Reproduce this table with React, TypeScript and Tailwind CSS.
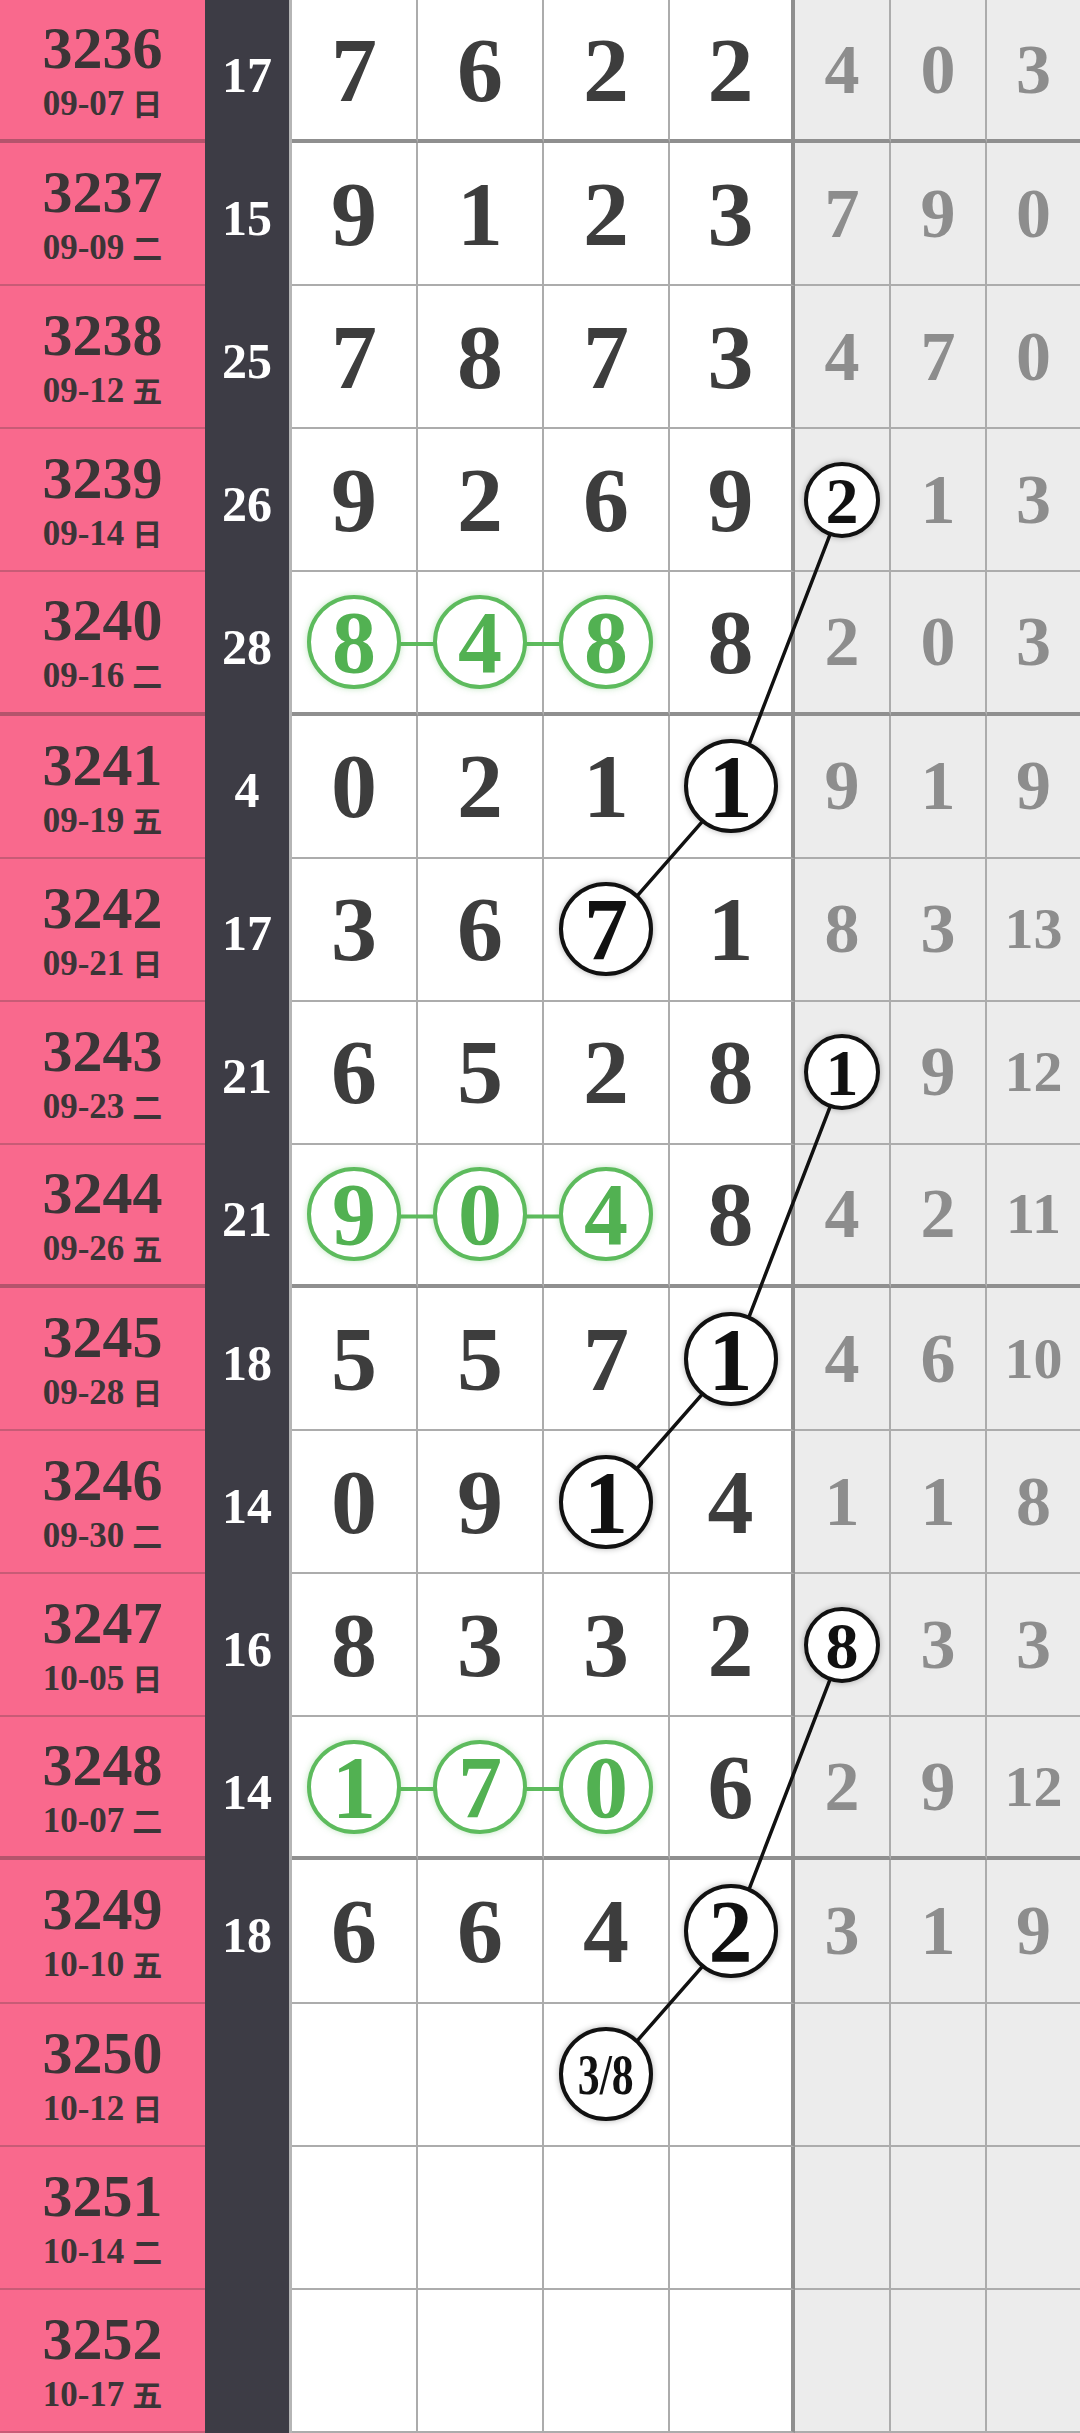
import React from 'react';

type Row = {
  no: string;
  date: string;
  day: string;
  sum?: string;
  nums: string[];
  miss: string[];
  ring?: number;
  green?: boolean;
};

const rows: Row[] = [
  { no: '3236', date: '09-07', day: '日', sum: '17', nums: ['7', '6', '2', '2'], miss: ['4', '0', '3'] },
  { no: '3237', date: '09-09', day: '二', sum: '15', nums: ['9', '1', '2', '3'], miss: ['7', '9', '0'] },
  { no: '3238', date: '09-12', day: '五', sum: '25', nums: ['7', '8', '7', '3'], miss: ['4', '7', '0'] },
  { no: '3239', date: '09-14', day: '日', sum: '26', nums: ['9', '2', '6', '9'], miss: ['2', '1', '3'], ring: 4 },
  { no: '3240', date: '09-16', day: '二', sum: '28', nums: ['8', '4', '8', '8'], miss: ['2', '0', '3'], green: true },
  { no: '3241', date: '09-19', day: '五', sum: '4', nums: ['0', '2', '1', '1'], miss: ['9', '1', '9'], ring: 3 },
  { no: '3242', date: '09-21', day: '日', sum: '17', nums: ['3', '6', '7', '1'], miss: ['8', '3', '13'], ring: 2 },
  { no: '3243', date: '09-23', day: '二', sum: '21', nums: ['6', '5', '2', '8'], miss: ['1', '9', '12'], ring: 4 },
  { no: '3244', date: '09-26', day: '五', sum: '21', nums: ['9', '0', '4', '8'], miss: ['4', '2', '11'], green: true },
  { no: '3245', date: '09-28', day: '日', sum: '18', nums: ['5', '5', '7', '1'], miss: ['4', '6', '10'], ring: 3 },
  { no: '3246', date: '09-30', day: '二', sum: '14', nums: ['0', '9', '1', '4'], miss: ['1', '1', '8'], ring: 2 },
  { no: '3247', date: '10-05', day: '日', sum: '16', nums: ['8', '3', '3', '2'], miss: ['8', '3', '3'], ring: 4 },
  { no: '3248', date: '10-07', day: '二', sum: '14', nums: ['1', '7', '0', '6'], miss: ['2', '9', '12'], green: true },
  { no: '3249', date: '10-10', day: '五', sum: '18', nums: ['6', '6', '4', '2'], miss: ['3', '1', '9'], ring: 3 },
  { no: '3250', date: '10-12', day: '日', nums: ['', '', '3/8', ''], miss: ['', '', ''], ring: 2 },
  { no: '3251', date: '10-14', day: '二', nums: ['', '', '', ''], miss: ['', '', ''] },
  { no: '3252', date: '10-17', day: '五', nums: ['', '', '', ''], miss: ['', '', ''] },
];

const ROW_H = 143.12;
const colX = [355, 481, 607, 732.5, 843, 939, 1033.5];
const cy = (i: number) => (i + 0.5) * ROW_H;

// trend lines: [row, col] pairs
const trends: [number, number][][] = [
  [[3, 4], [5, 3], [6, 2]],
  [[7, 4], [9, 3], [10, 2]],
  [[11, 4], [13, 3], [14, 2]],
];

const serif = { fontFamily: '"Liberation Serif", "Noto Sans CJK SC", serif' };

function Digit({ value, ring, green, small }: { value: string; ring?: boolean; green?: boolean; small?: boolean }) {
  if (!value) return null;
  if (green) {
    return (
      <div className="relative z-20 flex h-[94px] w-[94px] items-center justify-center rounded-full border-[4px] border-[#5dbb5d] bg-white text-[88px] font-bold leading-none text-[#52b152] shadow-[0_0_6px_rgba(80,180,80,0.35)]">
        <span className="mt-[2px]">{value}</span>
      </div>
    );
  }
  if (ring) {
    if (value === '3/8') {
      return (
        <div className="relative z-20 flex h-[94px] w-[94px] items-center justify-center rounded-full border-[4px] border-[#111] bg-white shadow-[0_0_6px_rgba(0,0,0,0.3)]">
          <span className="mt-[2px] text-[56px] font-bold leading-none text-[#111]" style={{ transform: 'scaleX(0.78)' }}>
            3/8
          </span>
        </div>
      );
    }
    return small ? (
      <div className="relative z-20 flex h-[76px] w-[76px] items-center justify-center rounded-full border-[4px] border-[#111] bg-white text-[66px] font-bold leading-none text-[#111] shadow-[0_0_6px_rgba(0,0,0,0.3)]">
        <span className="mt-[2px]">{value}</span>
      </div>
    ) : (
      <div className="relative z-20 flex h-[94px] w-[94px] items-center justify-center rounded-full border-[4px] border-[#111] bg-white text-[88px] font-bold leading-none text-[#111] shadow-[0_0_6px_rgba(0,0,0,0.3)]">
        <span className="mt-[2px]">{value}</span>
      </div>
    );
  }
  if (small) {
    return (
      <span className={`font-bold leading-none text-[#8d8d8d] ${value.length > 1 ? 'text-[58px]' : 'text-[70px]'}`}>
        {value}
      </span>
    );
  }
  return <span className="text-[92px] font-bold leading-none text-[#3d3d3d]">{value}</span>;
}

export default function App() {
  return (
    <div className="relative w-[1080px] overflow-hidden bg-white" style={serif}>
      {rows.map((r, i) => {
        const thick = i % 4 === 0 && i < 16;
        const lineB = thick ? 'border-b-[4px] border-b-[#8f8f8f]' : 'border-b-2 border-b-[#acacac]';
        const pinkB = thick ? 'border-b-[4px] border-b-[#b4546c]' : 'border-b-2 border-b-[#c85b76]';
        return (
          <div key={r.no} className="grid h-[143.12px] grid-cols-[205px_87px_126px_126px_126px_125px_96px_96px_93px]">
            <div className={`flex flex-col items-center justify-center bg-[#f9698d] text-[#3b3537] ${pinkB}`}>
              <div className="text-[60px] font-bold leading-none">{r.no}</div>
              <div className="mt-[8px] flex items-baseline text-[35px] font-bold leading-none">
                <span>{r.date}</span>
                <span className="ml-[8px] text-[30px]" style={{ fontFamily: '"Noto Sans CJK SC", sans-serif' }}>
                  {r.day}
                </span>
              </div>
            </div>
            <div className="flex items-center justify-center border-r-[3px] border-r-[#b5b5b5] bg-[#3d3c45] pt-[6px] text-[50px] font-bold leading-none text-white">
              {r.sum}
            </div>
            {r.nums.map((n, j) => (
              <div
                key={j}
                className={`flex items-center justify-center bg-white ${lineB} ${j === 3 ? 'border-r-[4px] border-r-[#8f8f8f]' : 'border-r-2 border-r-[#acacac]'}`}
              >
                <Digit value={n} ring={r.ring === j} green={r.green && j < 3} />
              </div>
            ))}
            {r.miss.map((n, j) => (
              <div
                key={j}
                className={`flex items-center justify-center bg-[#ececec] ${lineB} ${j < 2 ? 'border-r-2 border-r-[#acacac]' : ''}`}
              >
                <Digit value={n} ring={r.ring === j + 4} small />
              </div>
            ))}
          </div>
        );
      })}

      <svg className="pointer-events-none absolute left-0 top-0 z-10" width={1080} height={2433}>
        {rows.map((r, i) =>
          r.green ? (
            <line key={`g${i}`} x1={colX[0]} y1={cy(i)} x2={colX[2]} y2={cy(i)} stroke="#5dbb5d" strokeWidth={4} />
          ) : null
        )}
        {trends.map((pts, k) => (
          <polyline
            key={k}
            points={pts.map(([ri, ci]) => `${colX[ci]},${cy(ri)}`).join(' ')}
            fill="none"
            stroke="#111"
            strokeWidth={3.5}
          />
        ))}
      </svg>
    </div>
  );
}
